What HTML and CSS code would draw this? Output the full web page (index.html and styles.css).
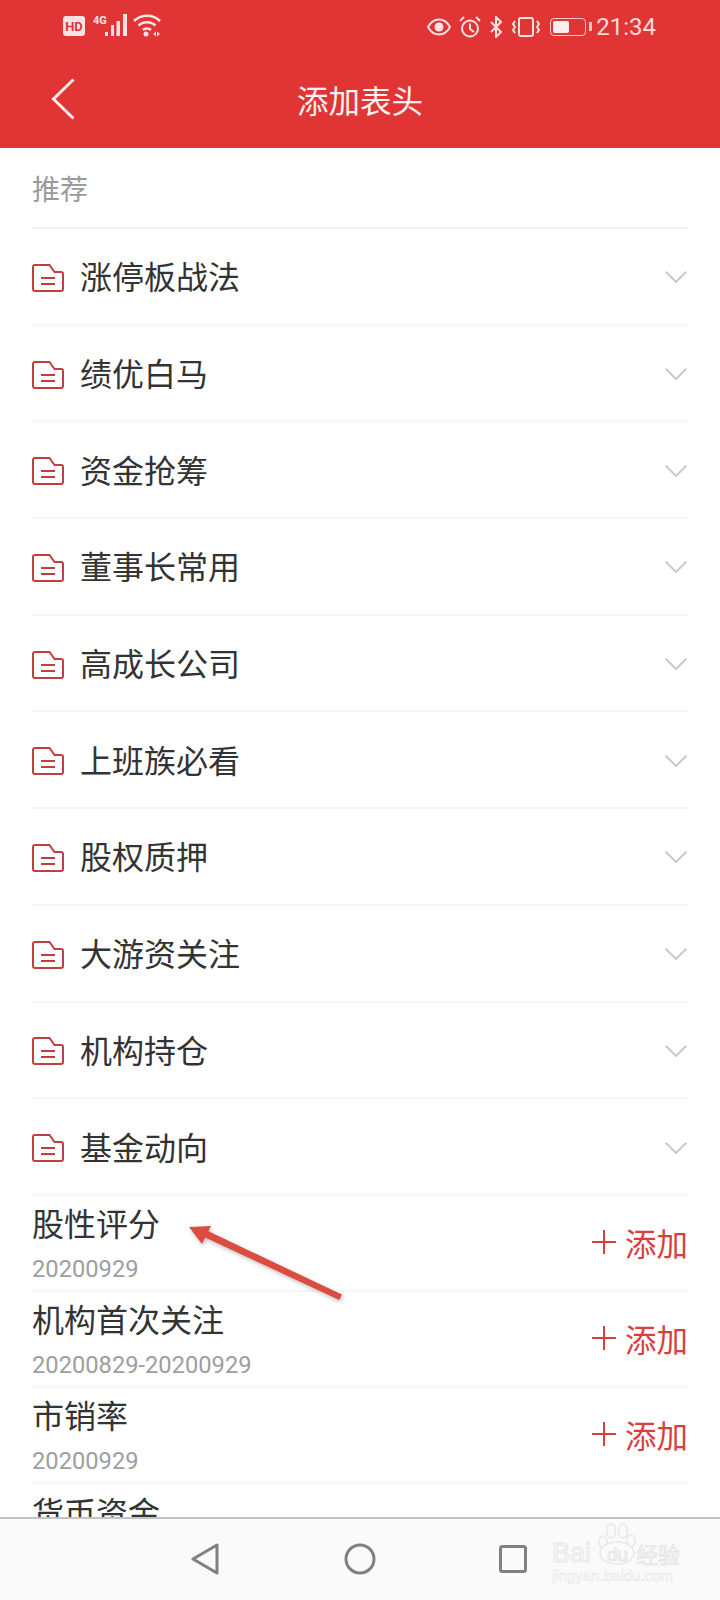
FILE: index.html
```html
<!DOCTYPE html>
<html lang="zh">
<head>
    <meta charset="UTF-8">
    <meta name="viewport" content="width=device-width, initial-scale=1.0">
    <title>添加表头</title>
    <link rel="stylesheet" href="styles.css">
</head>
<body>
    <svg class="icon-defs" width="0" height="0">
        <defs>
            <symbol id="folder" viewBox="0 0 32 28">
                <path d="M1 3a2 2 0 0 1 2-2h14.500l5 7H29a2 2 0 0 1 2 2v15a2 2 0 0 1-2 2H3a2 2 0 0 1-2-2z" fill="none" stroke="#c04040" stroke-width="2"/>
                <path d="M9 14h14M9 20h14" stroke="#c04040" stroke-width="2"/>
            </symbol>
            <symbol id="chevron" viewBox="0 0 22 12">
                <path d="M.7.7 11 11 21.300.7" fill="none" stroke="#c9c9c9" stroke-width="2"/>
            </symbol>
            <symbol id="plus" viewBox="0 0 24 24">
                <path d="M0 12h24M12 0v24" stroke="#d8403f" stroke-width="2"/>
            </symbol>
        </defs>
    </svg>

    <header class="app-header">
        <div class="status-bar">
            <div class="status-left">
                <svg class="st-hd" width="22" height="20" viewBox="0 0 22 20"><rect width="22" height="20" rx="3" fill="#fbe3e3"/><text x="11" y="15" text-anchor="middle" class="hd-text">HD</text></svg>
                <svg width="34" height="22" viewBox="0 0 34 22"><text x="0" y="10" class="g-text">4G</text><path d="M12 18h3v4h-3zM18 11h3v11h-3zM23.500 7h3.500v15h-3.500zM30 0h4v22h-4z" fill="#fbe3e3"/></svg>
                <svg width="28" height="23" viewBox="0 0 28 23"><path d="M1 7c7-7 19-7 26 0M5.500 11.500c4.500-4.500 12.500-4.500 17 0M10 16c2-2 6-2 8 0" fill="none" stroke="#fbe3e3" stroke-width="2.500"/><circle cx="13" cy="20" r="2.500" fill="#fbe3e3"/><path d="M20 20l3-2.500v5zM24 17.500l3 2.500-3 2.500z" fill="#fbe3e3"/></svg>
            </div>
            <div class="status-right">
                <svg width="24" height="18" viewBox="0 0 24 18"><path d="M1 9c5.500-10 16.500-10 22 0-5.500 10-16.500 10-22 0z" fill="none" stroke="#fbe3e3" stroke-width="2"/><circle cx="12" cy="9" r="4.500" fill="#fbe3e3"/></svg>
                <svg width="22" height="22" viewBox="0 0 22 22"><circle cx="11" cy="12.500" r="8" fill="none" stroke="#fbe3e3" stroke-width="2"/><path d="M11 7.500v5.500l4 3M1 5l4-4M21 5l-4-4" fill="none" stroke="#fbe3e3" stroke-width="2"/></svg>
                <svg width="15" height="22" viewBox="0 0 15 22"><path d="M2 6l10 10-5 5V1l5 5L2 16" fill="none" stroke="#fbe3e3" stroke-width="2"/></svg>
                <svg width="28" height="20" viewBox="0 0 28 20"><rect x="7" y="1" width="14" height="18" rx="2" fill="none" stroke="#fbe3e3" stroke-width="2"/><path d="M3 4 1 7l2 3-2 3 2 3M25 4l2 3-2 3 2 3-2 3" fill="none" stroke="#fbe3e3" stroke-width="2"/></svg>
                <div class="battery"><div class="battery-fill"></div></div>
                <span class="clock">21:34</span>
            </div>
        </div>
        <div class="title-bar">
            <svg class="back" width="24" height="42" viewBox="0 0 24 42"><path d="M22.500 1.500 2.500 21l20 19.500" fill="none" stroke="#fbeaea" stroke-width="3"/></svg>
            <h1>添加表头</h1>
        </div>
    </header>

    <main class="content">
        <div class="section-title">推荐</div>
        <ul class="list">
            <li class="folder-row"><svg class="folder" width="32" height="28"><use href="#folder"/></svg><span class="name">涨停板战法</span><svg class="chev" width="22" height="12"><use href="#chevron"/></svg></li>
            <li class="folder-row"><svg class="folder" width="32" height="28"><use href="#folder"/></svg><span class="name">绩优白马</span><svg class="chev" width="22" height="12"><use href="#chevron"/></svg></li>
            <li class="folder-row"><svg class="folder" width="32" height="28"><use href="#folder"/></svg><span class="name">资金抢筹</span><svg class="chev" width="22" height="12"><use href="#chevron"/></svg></li>
            <li class="folder-row"><svg class="folder" width="32" height="28"><use href="#folder"/></svg><span class="name">董事长常用</span><svg class="chev" width="22" height="12"><use href="#chevron"/></svg></li>
            <li class="folder-row"><svg class="folder" width="32" height="28"><use href="#folder"/></svg><span class="name">高成长公司</span><svg class="chev" width="22" height="12"><use href="#chevron"/></svg></li>
            <li class="folder-row"><svg class="folder" width="32" height="28"><use href="#folder"/></svg><span class="name">上班族必看</span><svg class="chev" width="22" height="12"><use href="#chevron"/></svg></li>
            <li class="folder-row"><svg class="folder" width="32" height="28"><use href="#folder"/></svg><span class="name">股权质押</span><svg class="chev" width="22" height="12"><use href="#chevron"/></svg></li>
            <li class="folder-row"><svg class="folder" width="32" height="28"><use href="#folder"/></svg><span class="name">大游资关注</span><svg class="chev" width="22" height="12"><use href="#chevron"/></svg></li>
            <li class="folder-row"><svg class="folder" width="32" height="28"><use href="#folder"/></svg><span class="name">机构持仓</span><svg class="chev" width="22" height="12"><use href="#chevron"/></svg></li>
            <li class="folder-row"><svg class="folder" width="32" height="28"><use href="#folder"/></svg><span class="name">基金动向</span><svg class="chev" width="22" height="12"><use href="#chevron"/></svg></li>

            <li class="add-row">
                <div class="info"><div class="name">股性评分</div><div class="date">20200929</div></div>
                <div class="add"><svg width="24" height="24"><use href="#plus"/></svg><span>添加</span></div>
            </li>
            <li class="add-row">
                <div class="info"><div class="name">机构首次关注</div><div class="date">20200829-20200929</div></div>
                <div class="add"><svg width="24" height="24"><use href="#plus"/></svg><span>添加</span></div>
            </li>
            <li class="add-row">
                <div class="info"><div class="name">市销率</div><div class="date">20200929</div></div>
                <div class="add"><svg width="24" height="24"><use href="#plus"/></svg><span>添加</span></div>
            </li>
            <li class="add-row last-row">
                <div class="info"><div class="name">货币资金</div></div>
            </li>
        </ul>
    </main>

    <nav class="nav-bar">
        <svg width="28" height="32" viewBox="0 0 28 32"><path d="M26 2v28L2 16z" fill="none" stroke="#808080" stroke-width="3" stroke-linejoin="round"/></svg>
        <svg class="nav-home" width="32" height="32" viewBox="0 0 32 32"><circle cx="16" cy="16" r="14" fill="none" stroke="#808080" stroke-width="3"/></svg>
        <svg width="28" height="28" viewBox="0 0 28 28"><rect x="1.500" y="1.500" width="25" height="25" rx="2" fill="none" stroke="#808080" stroke-width="3"/></svg>
    </nav>

    <!-- annotation arrow on top of the screenshot -->
    <svg class="arrow" width="720" height="1600" viewBox="0 0 720 1600">
        <path d="M204 1230 206 1237 339 1299 341 1295z" fill="#dc4c40" stroke="#dc4c40" stroke-width="1.500" stroke-linejoin="round"/>
        <path d="M189 1227 211 1226 202 1244z" fill="#dc4c40"/>
    </svg>

    <div class="watermark">
        <svg class="paw" width="40" height="42" viewBox="0 0 40 42"><g fill="#fafafa" stroke="#e8e8e8" stroke-width="1.500"><ellipse cx="6" cy="19" rx="4" ry="6"/><ellipse cx="14" cy="8" rx="4.500" ry="7"/><ellipse cx="26" cy="8" rx="4.500" ry="7"/><ellipse cx="34" cy="18" rx="4" ry="6"/><ellipse cx="20" cy="30" rx="17" ry="11"/></g></svg>
        <div class="wm-main"><span class="wm-bai">Bai</span><span class="wm-du">du</span><span class="wm-cn">经验</span></div>
        <div class="wm-url">jingyan.baidu.com</div>
    </div>
</body>
</html>
```

FILE: styles.css
```css
* {
    box-sizing: border-box;
}
html, body {
    margin: 0;
    padding: 0;
}
body {
    position: relative;
    width: 720px;
    height: 1600px;
    overflow: hidden;
    display: flex;
    flex-direction: column;
    background-color: #ffffff;
    color: #333;
    font-family: "Noto Sans CJK SC", "Noto Sans", sans-serif;
}
.icon-defs {
    position: absolute;
}
.app-header {
    flex: none;
    height: 148px;
    background-color: #e13535;
    color: #fff;
}
.status-bar {
    height: 54px;
    padding: 14px 64px 0 63px;
    display: flex;
    justify-content: space-between;
}
.status-left {
    display: flex;
    align-items: flex-start;
    gap: 8px;
}
.status-left svg:last-child {
    margin-left: -2px;
}
.st-hd {
    margin-top: 2px;
}
.hd-text {
    font: bold 13px "Roboto", sans-serif;
    fill: #e13535;
}
.g-text {
    font: bold 11px "Roboto", sans-serif;
    fill: #fbe3e3;
}
.status-right {
    display: flex;
    align-items: center;
    gap: 8px;
    height: 26px;
}
.battery {
    position: relative;
    width: 36px;
    height: 18px;
    margin-left: 2px;
    margin-right: 2px;
    padding: 2px;
    border: 1.500px solid #f7caca;
    border-radius: 4px;
}
.battery::after {
    content: "";
    position: absolute;
    top: 3px;
    right: -7px;
    width: 3px;
    height: 9px;
    background-color: #f7caca;
}
.battery-fill {
    width: 16px;
    height: 100%;
    border-radius: 2px;
    background-color: #fdeeee;
}
.clock {
    font-family: "Roboto", sans-serif;
    font-size: 24px;
    color: #fbdcdc;
}
.title-bar {
    position: relative;
    height: 94px;
    display: flex;
    align-items: center;
    justify-content: center;
}
.back {
    position: absolute;
    left: 51px;
    top: 24px;
}
h1 {
    margin: 0;
    font-size: 31.500px;
    font-weight: 400;
    line-height: 1;
    padding-bottom: 2px;
    color: #fdf1f1;
}
.content {
    flex: 1;
    min-height: 0;
    overflow: hidden;
    padding: 0 32px;
}
.section-title {
    height: 81px;
    padding-top: 20px;
    font-size: 28px;
    line-height: 40px;
    color: #9a9a9a;
    border-bottom: 2px solid #f0f0f0;
}
.list {
    list-style-type: none;
    margin: 0;
    padding: 0;
}
.folder-row {
    height: 96.700px;
    display: flex;
    align-items: center;
    border-bottom: 2px solid #f6f6f6;
}
.folder {
    flex: none;
    margin-top: 3px;
    margin-right: 16px;
}
.name {
    font-size: 32px;
    line-height: 44px;
    color: #333;
}
.folder-row .name {
    padding-bottom: 2px;
}
.chev {
    margin-left: auto;
    margin-right: 1px;
    margin-top: 2px;
}
.add-row {
    height: 96.200px;
    display: flex;
    align-items: center;
    justify-content: space-between;
    border-bottom: 2px solid #f6f6f6;
}
.last-row {
    align-items: flex-start;
    padding-top: 5px;
}
.info {
    padding-bottom: 2px;
}
.date {
    margin-top: 10px;
    font-family: "Roboto", sans-serif;
    font-size: 23.700px;
    line-height: 30px;
    color: #9e9e9e;
}
.add {
    display: flex;
    align-items: center;
    gap: 9px;
    padding-bottom: 2px;
    font-size: 31.500px;
    line-height: 44px;
    color: #d8403f;
}
.nav-bar {
    flex: none;
    height: 83px;
    padding: 0 193px 2px 191px;
    display: flex;
    align-items: center;
    justify-content: space-between;
    background-color: #fafafa;
    border-top: 2px solid #c4c4c4;
}
.nav-home {
    margin-left: 2px;
}
.arrow {
    position: absolute;
    left: 0;
    top: 0;
    filter: drop-shadow(1px 2px 2px rgba(0, 0, 0, 0.25));
}
.watermark {
    position: absolute;
    left: 552px;
    top: 1523px;
    width: 130px;
    height: 62px;
    padding-top: 17px;
    color: #fafafa;
    -webkit-text-stroke: 1px #e6e6e6;
}
.paw {
    position: absolute;
    left: 45px;
    top: 0;
}
.wm-main {
    position: relative;
    display: flex;
    align-items: center;
    height: 26px;
    font-family: "Liberation Sans", "Noto Sans CJK SC", sans-serif;
    white-space: nowrap;
}
.wm-bai {
    width: 47px;
    font-size: 27px;
}
.wm-du {
    width: 37px;
    padding-top: 3px;
    font-size: 19px;
    text-align: center;
}
.wm-cn {
    font-size: 22px;
}
.wm-url {
    margin-top: 2px;
    font-family: "Liberation Sans", sans-serif;
    font-size: 15px;
    line-height: 16px;
    white-space: nowrap;
    -webkit-text-stroke: 0.5px #e6e6e6;
}
```
